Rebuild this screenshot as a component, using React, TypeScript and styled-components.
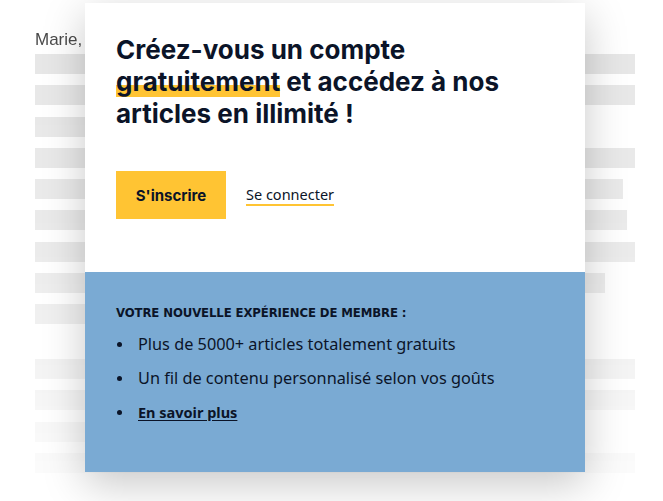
import React from "react";
import styled, { createGlobalStyle } from "styled-components";

const Global = createGlobalStyle`
  html, body { margin: 0; padding: 0; background: #ffffff; }
  body { width: 663px; height: 501px; overflow: hidden; }
`;

const Page = styled.div`
  position: relative;
  width: 663px;
  height: 501px;
  overflow: hidden;
  background: #fff;
`;

const Article = styled.div`
  padding: 29px 28px 0 35px;
  display: flex;
  flex-direction: column;
  -webkit-mask-image: linear-gradient(to bottom, rgba(0,0,0,1) 0px, rgba(0,0,0,0.8) 250px, rgba(0,0,0,0.12) 480px);
  mask-image: linear-gradient(to bottom, rgba(0,0,0,1) 0px, rgba(0,0,0,0.8) 250px, rgba(0,0,0,0.12) 480px);
`;

const Greeting = styled.p`
  margin: 0 0 4px;
  font-family: "Liberation Sans", Arial, sans-serif;
  font-size: 17px;
  line-height: 21px;
  color: #444;
`;

const Paragraph = styled.div`
  display: flex;
  flex-direction: column;
  gap: 11.25px;
  margin-bottom: 35px;
`;

const Bar = styled.div<{ $w: number }>`
  height: 20px;
  width: ${(p) => p.$w}px;
  background: #e6e6e6;
`;

const Modal = styled.div`
  position: absolute;
  left: 85px;
  top: 3px;
  width: 500px;
  display: flex;
  flex-direction: column;
  box-shadow: 0 12px 40px rgba(0, 0, 0, 0.22);
`;

const Top = styled.div`
  background: #fff;
  height: 269px;
  box-sizing: border-box;
  padding: 31px 31px 0;
  display: flex;
  flex-direction: column;
`;

const Title = styled.h1`
  margin: 0;
  max-width: 400px;
  font-family: Inter, "Noto Sans", sans-serif;
  font-weight: 700;
  font-size: 26px;
  line-height: 32px;
  letter-spacing: 0;
  color: #0b1428;
`;

const Highlight = styled.span`
  background: linear-gradient(to bottom, transparent 0, transparent 19px, #ffc433 19px, #ffc433 31.5px, transparent 31.5px);
`;

const Actions = styled.div`
  display: flex;
  align-items: center;
  gap: 20px;
  margin-top: 41px;
`;

const Primary = styled.button`
  width: 110px;
  height: 48px;
  border: 0;
  background: #ffc433;
  font-family: Inter, "Noto Sans", sans-serif;
  font-weight: 700;
  font-size: 15px;
  color: #0b1428;
  cursor: pointer;
  padding: 0;
`;

const SecondaryLink = styled.a`
  font-family: "Noto Sans", "Open Sans", sans-serif;
  font-size: 14.5px;
  line-height: 18px;
  color: #0b1428;
  text-decoration: none;
  border-bottom: 2px solid #ffc433;
  padding-bottom: 1px;
`;

const Bottom = styled.div`
  background: #7aaad3;
  height: 200px;
  box-sizing: border-box;
  padding: 33px 31px 0;
  display: flex;
  flex-direction: column;
`;

const Kicker = styled.h2`
  margin: 0 0 13px;
  font-family: "Liberation Sans Narrow", "DejaVu Sans Condensed", "Liberation Sans", sans-serif;
  font-stretch: condensed;
  font-weight: 700;
  font-size: 13px;
  line-height: 16px;
  color: #0b1428;
  letter-spacing: -0.1px;
`;

const List = styled.ul`
  margin: 0;
  padding: 0;
  list-style: none;
  display: flex;
  flex-direction: column;
  gap: 14px;
`;

const Item = styled.li`
  position: relative;
  padding-left: 22px;
  font-family: "Noto Sans", "Open Sans", sans-serif;
  font-size: 16.3px;
  line-height: 20px;
  color: #0b1428;
  &::before {
    content: "";
    position: absolute;
    left: 1px;
    top: 8px;
    width: 5px;
    height: 5px;
    border-radius: 50%;
    background: #0b1428;
  }
`;

const More = styled.a`
  font-size: 14.5px;
  font-weight: 700;
  color: #0b1428;
  text-decoration: underline;
  text-underline-offset: 2px;
`;

const paragraphs = [
  [600, 600, 520, 600, 588, 592, 600, 570, 500],
  [600, 600, 500, 600],
];

export default function App() {
  return (
    <Page>
      <Global />
      <Article>
        <Greeting>Marie,</Greeting>
        {paragraphs.map((rows, i) => (
          <Paragraph key={i}>
            {rows.map((w, j) => (
              <Bar key={j} $w={w} />
            ))}
          </Paragraph>
        ))}
      </Article>
      <Modal>
        <Top>
          <Title>
            Créez-vous un compte <Highlight>gratuitement</Highlight> et accédez à nos articles en illimité !
          </Title>
          <Actions>
            <Primary>S'inscrire</Primary>
            <SecondaryLink href="#">Se connecter</SecondaryLink>
          </Actions>
        </Top>
        <Bottom>
          <Kicker>VOTRE NOUVELLE EXPÉRIENCE DE MEMBRE :</Kicker>
          <List>
            <Item>Plus de 5000+ articles totalement gratuits</Item>
            <Item>Un fil de contenu personnalisé selon vos goûts</Item>
            <Item>
              <More href="#">En savoir plus</More>
            </Item>
          </List>
        </Bottom>
      </Modal>
    </Page>
  );
}
